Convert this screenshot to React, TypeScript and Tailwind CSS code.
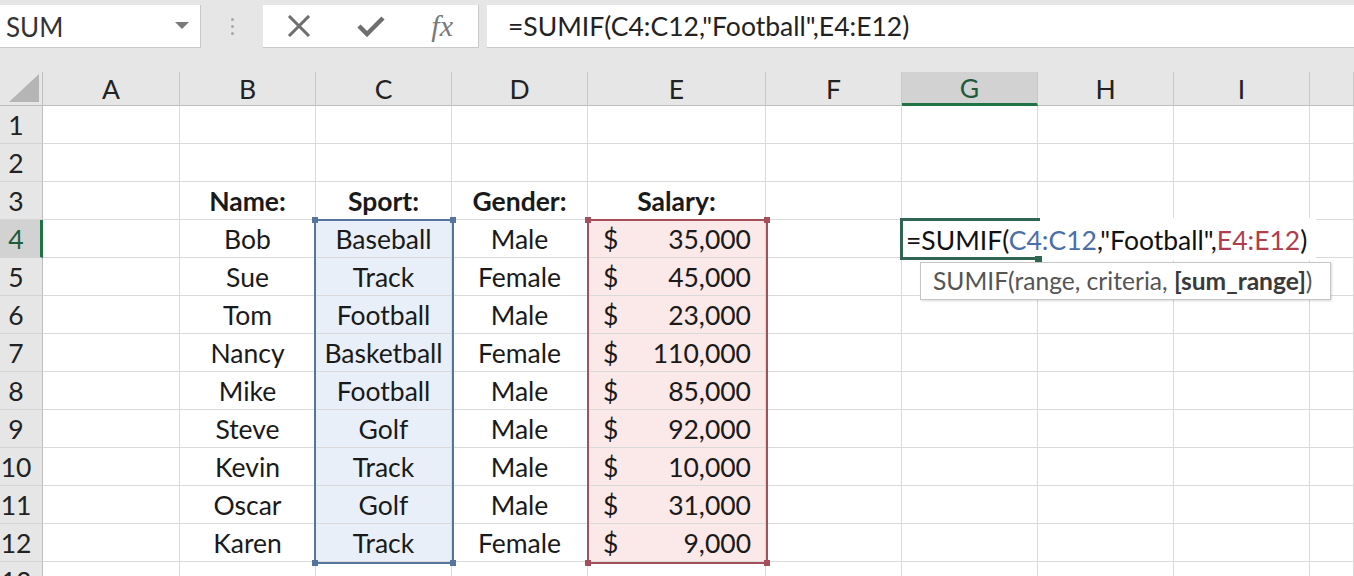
import React from "react";

const colLabels = ["A", "B", "C", "D", "E", "F", "G", "H", "I", ""];

type Row = { name?: string; sport?: string; gender?: string; salary?: string; header?: boolean };

const rows: Row[] = [
  {},
  {},
  { name: "Name:", sport: "Sport:", gender: "Gender:", salary: "Salary:", header: true },
  { name: "Bob", sport: "Baseball", gender: "Male", salary: "35,000" },
  { name: "Sue", sport: "Track", gender: "Female", salary: "45,000" },
  { name: "Tom", sport: "Football", gender: "Male", salary: "23,000" },
  { name: "Nancy", sport: "Basketball", gender: "Female", salary: "110,000" },
  { name: "Mike", sport: "Football", gender: "Male", salary: "85,000" },
  { name: "Steve", sport: "Golf", gender: "Male", salary: "92,000" },
  { name: "Kevin", sport: "Track", gender: "Male", salary: "10,000" },
  { name: "Oscar", sport: "Golf", gender: "Male", salary: "31,000" },
  { name: "Karen", sport: "Track", gender: "Female", salary: "9,000" },
  {},
];

function Handle({ className }: { className: string }) {
  return <div className={"absolute w-[6px] h-[6px] " + className} />;
}

export default function App() {
  return (
    <div className="w-[1354px] h-[576px] overflow-hidden bg-white font-['Lato',sans-serif] text-[#1a1a1a]">
      {/* Top formula bar */}
      <div className="h-[72px] bg-[#e6e6e6] pt-[5px] flex items-start">
        <div className="w-[201px] h-[43px] bg-white border-r border-b border-[#c8c8c8] flex items-center justify-between pl-[6px] pr-[11px]">
          <span className="text-[26px] text-[#333] pt-[2px]">SUM</span>
          <svg width="14" height="8" viewBox="0 0 14 8">
            <path d="M0 0 L14 0 L7 7 Z" fill="#7a7a7a" />
          </svg>
        </div>
        <div className="w-[62px] h-[43px] flex flex-col items-center justify-center gap-[4px]">
          <div className="w-[3px] h-[3px] rounded-full bg-[#a8a8a8]" />
          <div className="w-[3px] h-[3px] rounded-full bg-[#a8a8a8]" />
          <div className="w-[3px] h-[3px] rounded-full bg-[#a8a8a8]" />
        </div>
        <div className="w-[216px] h-[43px] bg-white border-r border-b border-[#c8c8c8] flex items-center">
          <div className="w-[72px] flex justify-center">
            <svg width="24" height="22" viewBox="0 0 24 22">
              <path d="M2 1 L22 21 M22 1 L2 21" stroke="#6e6e6e" strokeWidth="3" />
            </svg>
          </div>
          <div className="w-[72px] flex justify-center">
            <svg width="28" height="22" viewBox="0 0 28 22">
              <path d="M2 11 L10 19 L26 3" stroke="#6e6e6e" strokeWidth="4.5" fill="none" />
            </svg>
          </div>
          <div className="w-[72px] flex justify-center">
            <span className="font-['Liberation_Serif',serif] italic text-[30px] text-[#7a7a7a] leading-none">fx</span>
          </div>
        </div>
        <div className="ml-[8px] flex-1 h-[43px] bg-white border-b border-[#c8c8c8] flex items-center pl-[21px]">
          <span className="text-[26.5px] text-[#222] pt-[2px]">=SUMIF(C4:C12,"Football",E4:E12)</span>
        </div>
      </div>

      {/* Grid */}
      <div className="relative text-[26.5px]">
        <div className="grid grid-cols-[43px_137px_136px_136px_136px_178px_136px_136px_136px_136px_44px]">
          {/* corner */}
          <div className="h-[34px] bg-[#e6e6e6] border-r border-b border-[#bdbdbd] flex items-end justify-end pr-[3px] pb-[3px]">
            <svg width="30" height="28" viewBox="0 0 30 28">
              <path d="M30 0 L30 28 L0 28 Z" fill="#b5b5b5" />
            </svg>
          </div>
          {colLabels.map((l, i) =>
            l === "G" ? (
              <div
                key={i}
                className="h-[34px] pt-[2px] bg-[#d2d2d2] border-r border-[#c8c8c8] border-b-[3px] border-b-[#217346] flex items-center justify-center text-[#1e5a3c]"
              >
                {l}
              </div>
            ) : (
              <div
                key={i}
                className="h-[34px] pt-[2px] bg-[#e6e6e6] border-r border-b border-[#c8c8c8] border-b-[#bdbdbd] flex items-center justify-center text-[#222]"
              >
                {l}
              </div>
            )
          )}
          {rows.map((r, ri) => {
            const n = ri + 1;
            const inRange = n >= 4 && n <= 12;
            const bold = r.header ? "font-bold" : "";
            return (
              <React.Fragment key={ri}>
                {n === 4 ? (
                  <div className="h-[38px] pt-[3px] bg-[#d2d2d2] border-r-[3px] border-r-[#217346] border-b border-[#d4d4d4] flex items-center justify-center pr-[8px] text-[#1e5a3c]">
                    {n}
                  </div>
                ) : (
                  <div className="h-[38px] pt-[3px] bg-[#e6e6e6] border-r border-r-[#bdbdbd] border-b border-[#d4d4d4] flex items-center justify-center pr-[10px] text-[#222]">
                    {n}
                  </div>
                )}
                <div className="h-[38px] border-r border-b border-[#dadada]" />
                <div className={"h-[38px] pt-[3px] border-r border-b border-[#dadada] flex items-center justify-center " + bold}>
                  {r.name}
                </div>
                <div
                  className={
                    "h-[38px] pt-[3px] border-r border-b border-[#dadada] flex items-center justify-center " +
                    bold +
                    (inRange ? " bg-[#e8eff9]" : "")
                  }
                >
                  {r.sport}
                </div>
                <div className={"h-[38px] pt-[3px] border-r border-b border-[#dadada] flex items-center justify-center " + bold}>
                  {r.gender}
                </div>
                {r.header ? (
                  <div className="h-[38px] pt-[3px] border-r border-b border-[#dadada] flex items-center justify-center font-bold">
                    {r.salary}
                  </div>
                ) : (
                  <div
                    className={
                      "h-[38px] pt-[3px] border-r border-b border-[#dadada] flex items-center justify-between pl-[15px] pr-[14px]" +
                      (inRange ? " bg-[#fbe8e8]" : "")
                    }
                  >
                    {r.salary ? (
                      <>
                        <span>$</span>
                        <span>{r.salary}</span>
                      </>
                    ) : null}
                  </div>
                )}
                <div className="h-[38px] border-r border-b border-[#dadada]" />
                <div className="h-[38px] border-r border-b border-[#dadada]" />
                <div className="h-[38px] border-r border-b border-[#dadada]" />
                <div className="h-[38px] border-r border-b border-[#dadada]" />
                <div className="h-[38px] border-r border-b border-[#dadada]" />
              </React.Fragment>
            );
          })}
        </div>

        {/* Blue range C4:C12 */}
        <div className="absolute left-[314px] top-[147px] w-[140px] h-[345px] border-2 border-[#55759f] pointer-events-none">
          <Handle className="left-[-4px] top-[-4px] bg-[#55759f]" />
          <Handle className="right-[-4px] top-[-4px] bg-[#55759f]" />
          <Handle className="left-[-4px] bottom-[-4px] bg-[#55759f]" />
          <Handle className="right-[-4px] bottom-[-4px] bg-[#55759f]" />
        </div>
        {/* Red range E4:E12 */}
        <div className="absolute left-[587px] top-[147px] w-[181px] h-[345px] border-2 border-[#a3505c] pointer-events-none">
          <Handle className="left-[-4px] top-[-4px] bg-[#a3505c]" />
          <Handle className="right-[-4px] top-[-4px] bg-[#a3505c]" />
          <Handle className="left-[-4px] bottom-[-4px] bg-[#a3505c]" />
          <Handle className="right-[-4px] bottom-[-4px] bg-[#a3505c]" />
        </div>

        {/* Active cell in edit mode */}
        <div className="absolute left-[900px] top-[146px] h-[42px] w-[416px] bg-white flex items-center">
          <div className="absolute left-0 top-0 w-[140px] h-[42px] border-l-[3px] border-t-[3px] border-b-[3px] border-[#2f6652]" />
          <div className="absolute left-[135px] top-[38px] w-[7px] h-[6px] bg-[#2f6652]" />
          <span className="pl-[6px] pt-[3px] text-[#111] whitespace-nowrap">
            =SUMIF(<span className="text-[#4a6fa8]">C4:C12</span>,"Football",<span className="text-[#b03d4c]">E4:E12</span>)
          </span>
        </div>

        {/* Tooltip */}
        <div className="absolute left-[920px] top-[190px] h-[38px] w-[411px] bg-white border border-[#c6c6c6] shadow-[1px_1px_2px_rgba(0,0,0,0.15)] flex items-center pl-[12px]">
          <span className="text-[24.6px] text-[#555] whitespace-nowrap">
            SUMIF(range, criteria, <span className="font-bold text-[#3a3a3a]">[sum_range]</span>)
          </span>
        </div>
      </div>
    </div>
  );
}
